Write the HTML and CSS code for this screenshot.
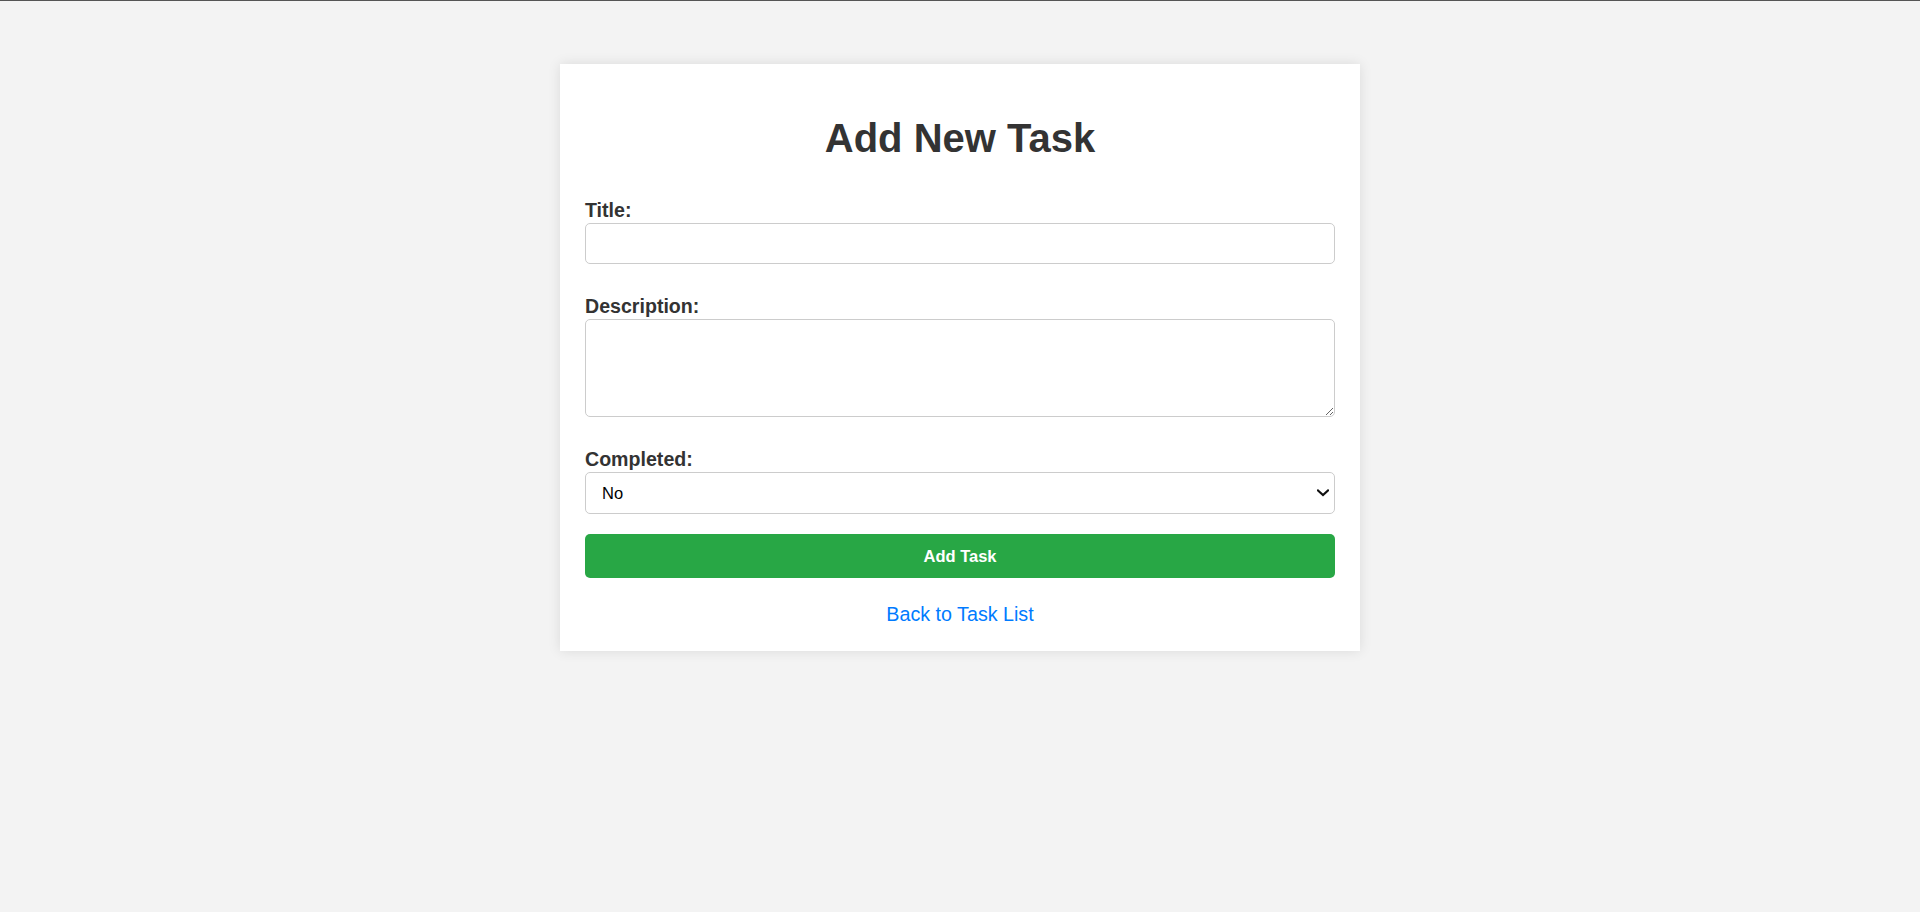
FILE: index.html
```html
<!DOCTYPE html>
<html lang="en">
<head>
<meta charset="utf-8">
<title>Add New Task</title>
<link rel="stylesheet" href="styles.css">
</head>
<body>
  <div class="container">
    <h1 class="page-title">Add New Task</h1>
    <form class="task-form">
      <div class="form-group">
        <label class="field-label" for="title">Title:</label>
        <input class="field-input" type="text" id="title" name="title">
      </div>
      <div class="form-group">
        <label class="field-label" for="description">Description:</label>
        <textarea class="field-input field-textarea" id="description" name="description"></textarea>
      </div>
      <div class="form-group form-group-last">
        <label class="field-label" for="completed">Completed:</label>
        <div class="select-wrap">
          <select class="field-input field-select" id="completed" name="completed">
            <option>No</option>
            <option>Yes</option>
          </select>
          <svg class="select-arrow" width="12" height="8" viewBox="0 0 12 8" aria-hidden="true">
            <path d="M1 1.5 L6 6 L11 1.5" fill="none" stroke="#111" stroke-width="2.2" stroke-linecap="square"/>
          </svg>
        </div>
      </div>
      <button class="submit-btn" type="submit">Add Task</button>
    </form>
    <a class="back-link" href="#">Back to Task List</a>
  </div>
</body>
</html>
```

FILE: styles.css
```css
html, body {
  margin: 0;
  padding: 0;
}

body {
  background: #f3f3f3;
  border-top: 1px solid #555555;
  font-family: "Liberation Sans", Arial, sans-serif;
  color: #333333;
  min-height: 911px;
}

.container {
  width: 750px;
  margin: 63px auto 0;
  padding: 25px;
  background: #ffffff;
  box-shadow: 0 0 12px rgba(0, 0, 0, 0.1);
}

.page-title {
  font-size: 40px;
  line-height: 46px;
  font-weight: bold;
  text-align: center;
  color: #333333;
  margin: 26px 0 38px;
}

.task-form {
  margin: 0;
}

.form-group {
  margin-bottom: 31px;
}

.form-group-last {
  margin-bottom: 20px;
}

.field-label {
  display: block;
  font-size: 19.6px;
  line-height: 23px;
  font-weight: bold;
  color: #333333;
  margin-bottom: 1px;
}

.field-input {
  display: block;
  box-sizing: border-box;
  width: 100%;
  height: 41px;
  margin: 0;
  padding: 10px 12px;
  border: 1px solid #cccccc;
  border-radius: 5px;
  background: #ffffff;
  font-family: "Liberation Sans", Arial, sans-serif;
  font-size: 16.5px;
  color: #000000;
}

.field-textarea {
  height: 98px;
  resize: vertical;
}

.select-wrap {
  position: relative;
}

.field-select {
  height: 42px;
  padding: 0 30px 0 16px;
  -webkit-appearance: none;
  appearance: none;
}

.select-arrow {
  position: absolute;
  right: 6px;
  top: 17px;
  pointer-events: none;
}

.submit-btn {
  display: block;
  width: 100%;
  height: 44px;
  margin: 0;
  padding: 0;
  border: none;
  border-radius: 5px;
  background: #28a745;
  color: #ffffff;
  font-family: "Liberation Sans", Arial, sans-serif;
  font-size: 16.5px;
  font-weight: bold;
  cursor: pointer;
}

.back-link {
  display: block;
  margin-top: 25px;
  text-align: center;
  font-size: 19.7px;
  line-height: 23px;
  color: #007bff;
  text-decoration: none;
}
```
